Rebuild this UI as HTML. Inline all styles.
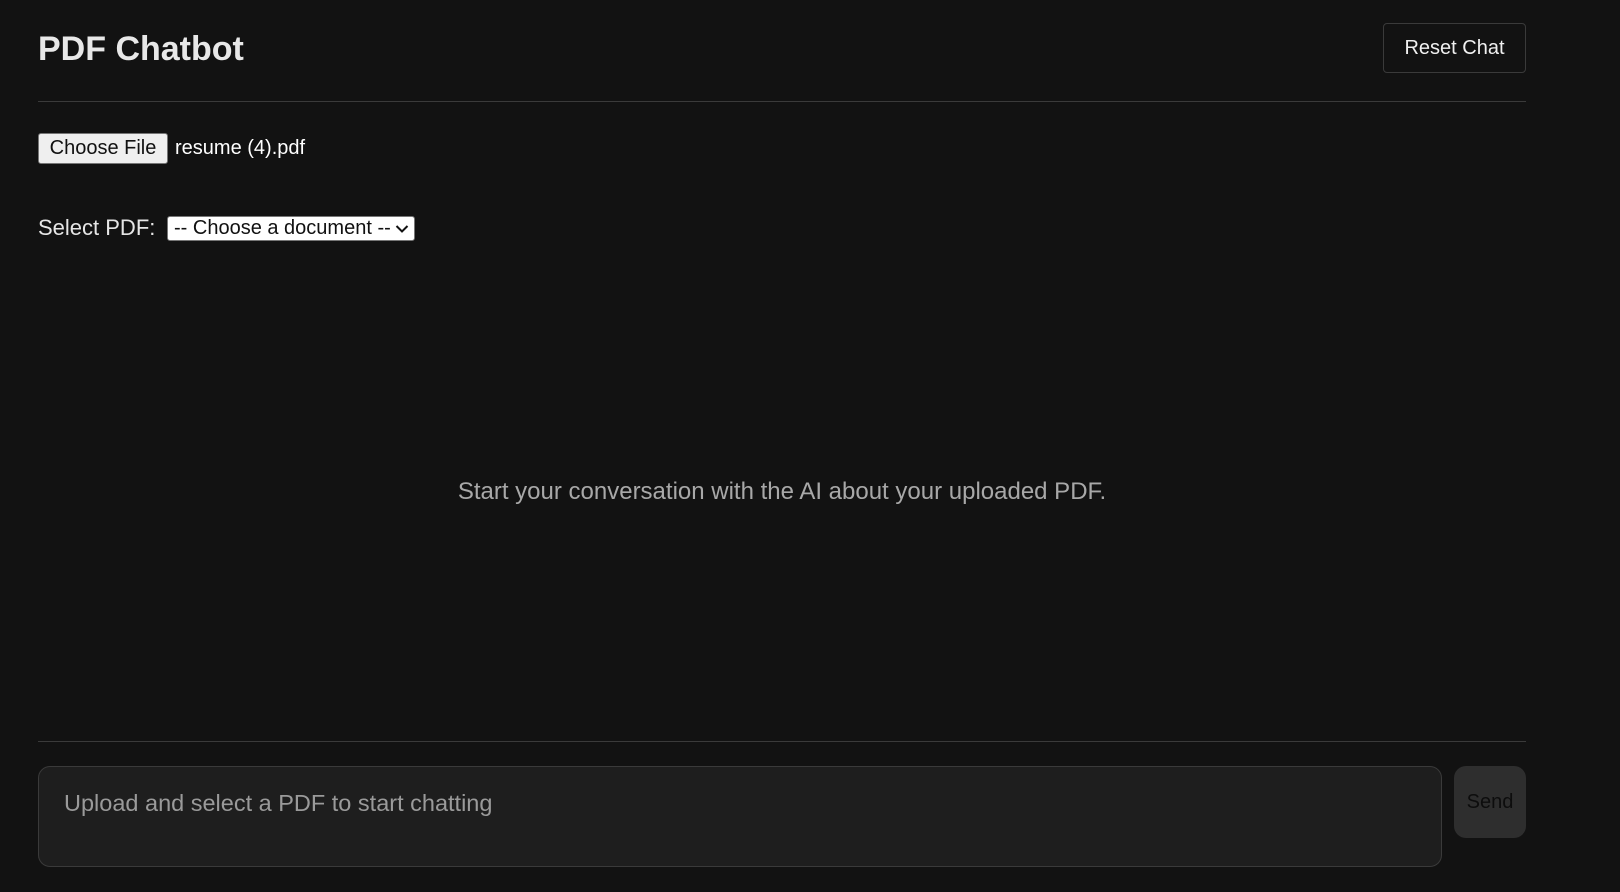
<!DOCTYPE html>
<html><head><meta charset="utf-8"><style>
html,body{margin:0;padding:0;background:#121212;width:1620px;height:892px;overflow:hidden;font-family:"Liberation Sans",sans-serif;color:#e6e6e6}
.a{position:absolute}
h1{position:absolute;left:38px;top:30px;margin:0;font-size:34px;font-weight:bold;color:#e8e8e8;letter-spacing:0px}
.reset{left:1383px;top:23px;width:143px;height:50px;border:1px solid #3a3a3a;border-radius:4px;background:#121212;color:#f0f0f0;font-size:20px;display:flex;align-items:center;justify-content:center;box-sizing:border-box}
.rule{left:38px;width:1488px;height:1px;background:#3a3a3a}
.fbtn{left:38px;top:133px;width:130px;height:31px;background:#efefef;border:1px solid #767676;border-radius:3px;box-sizing:border-box;color:#111;font-size:20px;display:flex;align-items:center;justify-content:center}
.sel{left:167px;top:216px;width:248px;height:25px;background:#fff;border:1px solid #767676;border-radius:3px;box-sizing:border-box;color:#111;font-size:20px;line-height:23px;padding-left:6px}
.ta{left:38px;top:766px;width:1404px;height:101px;background:#1e1e1e;border:1px solid #3a3a3a;border-radius:12px;box-sizing:border-box;color:#9a9a9a;font-size:23.5px;padding:23px 0 0 25px}
.send{left:1454px;top:766px;width:72px;height:72px;background:#2e2e2e;border-radius:12px;color:#0d0d0d;font-size:20px;display:flex;align-items:center;justify-content:center}
</style></head><body>
<h1>PDF Chatbot</h1>
<div class="a reset">Reset Chat</div>
<div class="a rule" style="top:101px"></div>
<div class="a fbtn">Choose File</div>
<div class="a" style="left:175px;top:137px;font-size:20px;color:#fff">resume (4).pdf</div>
<div class="a" style="left:38px;top:215px;font-size:22px;color:#e6e6e6">Select PDF:</div>
<div class="a sel">-- Choose a document --<svg style="position:absolute;right:5px;top:7px" width="14" height="10" viewBox="0 0 14 10"><path d="M1.5 2 L7 7.5 L12.5 2" fill="none" stroke="#111" stroke-width="2"/></svg></div>
<div class="a" style="left:0;width:1564px;top:478px;text-align:center;font-size:24px;color:#a8a8a8">Start your conversation with the AI about your uploaded PDF.</div>
<div class="a rule" style="top:741px"></div>
<div class="a ta">Upload and select a PDF to start chatting</div>
<div class="a send">Send</div>
</body></html>
